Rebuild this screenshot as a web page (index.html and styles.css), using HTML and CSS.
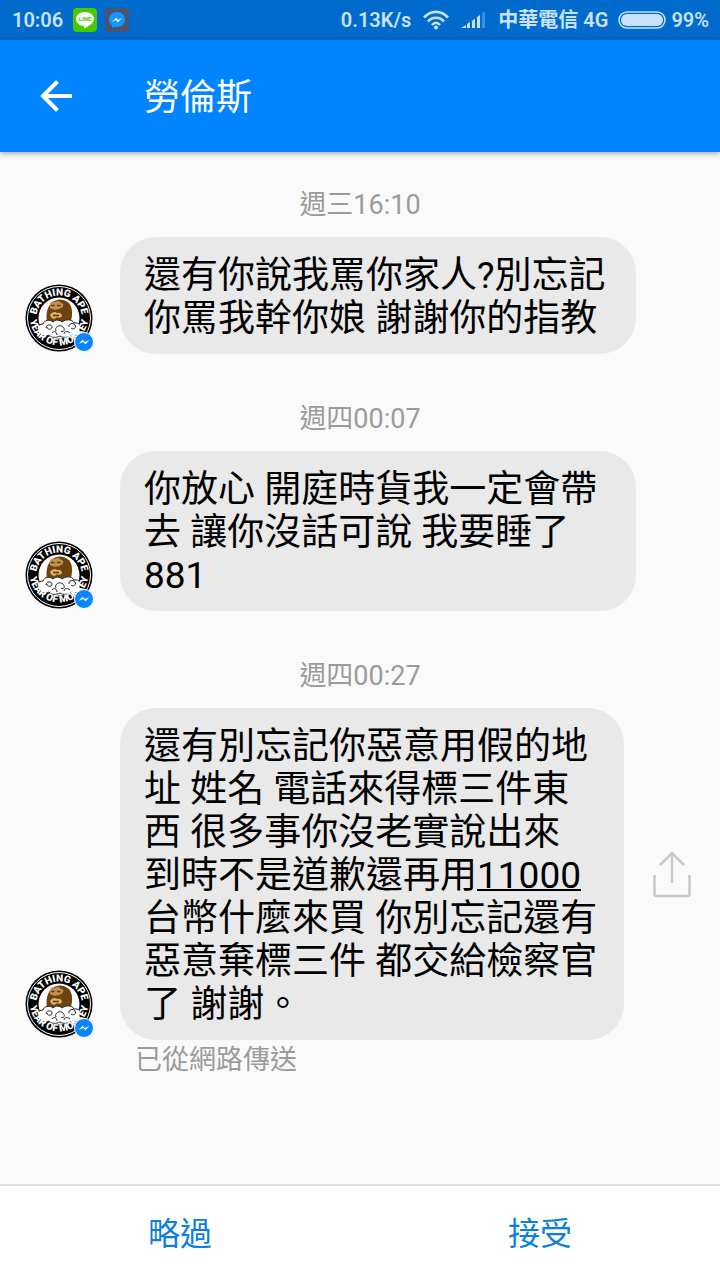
FILE: index.html
```html
<!DOCTYPE html>
<html lang="zh-Hant">
<head>
    <meta charset="UTF-8">
    <meta name="viewport" content="width=device-width, initial-scale=1.0">
    <title>勞倫斯</title>
    <link rel="stylesheet" href="styles.css">
</head>
<body>

<!-- Shared drawings -->
<svg class="symbols" aria-hidden="true">
    <symbol id="avatar" viewBox="0 0 68 68" overflow="visible">
        <defs>
            <path id="arc-top" d="M11.500 38 A22.800 22.800 0 1 1 56.500 38"/>
            <path id="arc-bottom" d="M4.500 32 A29.500 29.500 0 0 0 63.500 32"/>
        </defs>
        <circle cx="34" cy="34" r="33.500" fill="#000"/>
        <circle cx="34" cy="34" r="31.500" fill="none" stroke="#fff" stroke-width="1"/>
        <circle cx="34" cy="34" r="20.500" fill="#fff"/>
        <path d="M22 38C20 27 24 16 35 15.500C46 16 49 25 46 37C42 39 27 40 22 38Z" fill="#6d430f"/>
        <path d="M25 24C24 19 27 16 30 18C32 16 35 17 36 19C39 19 39 23 36 24L34 25C31 26 28 26 25 24Z" fill="#c5924e"/>
        <path d="M25 31C27 28 30 27 32 29C35 28 37 30 37 32C36 34 33 34 32 33C30 36 26 35 25 31Z" fill="#e0b070"/>
        <path d="M26 21.500h3.500M32 21.500h3.500M28 31.500h6" fill="none" stroke="#5b370e" stroke-width="1.500"/>
        <path d="M15 49C11 46 12 40 18 40C19 36 25 35 28 38C31 35 35 36 37 38C41 35 47 35 49 39C54 38 57 42 54 46C56 50 51 53 47 51C43 54 38 54 35 52C31 54 26 54 24 51C20 53 15 52 15 49Z" fill="#fff" stroke="#222" stroke-width="1"/>
        <path d="M21 44c0-4 6-4 6-1s-5 3-5 0M31 47c-2-4 4-7 7-4s0 6-2 4M44 43c-1-3 4-5 6-2s-2 5-4 3M27 49c2-3 5-1 5 2M39 50c0-3 4-3 6-1" fill="none" stroke="#222" stroke-width="1"/>
        <text class="avatar-text"><textPath href="#arc-top" startOffset="50%">BATHING APE</textPath></text>
        <text class="avatar-text"><textPath href="#arc-bottom" startOffset="50%">YEAR OF MONKEY</textPath></text>
    </symbol>
    <symbol id="messenger" viewBox="0 0 20 20">
        <circle cx="10" cy="10" r="9.500" fill="#0a84ff" stroke="#fff" stroke-width="1"/>
        <path d="M4.500 12L8.500 7.700L10.800 10L15.500 8L11.500 12.300L9.200 10Z" fill="#fff"/>
    </symbol>
</svg>

<div class="app">
    <div class="status-bar">
        <span>10:06</span>
        <svg class="app-icon" viewBox="0 0 24 24">
            <rect width="24" height="24" rx="4" fill="#4ac800"/>
            <path d="M12 4C7 4 3 7 3 11C3 14.500 6 17.400 10.500 18C11.500 18.200 11 19.500 11.200 20.500C15 18.500 21 15.500 21 11C21 7 17 4 12 4Z" fill="#fff"/>
            <text class="line-text" x="12" y="13">LINE</text>
        </svg>
        <svg class="app-icon messenger-icon" viewBox="0 0 24 24">
            <rect width="24" height="24" rx="4" fill="#485570"/>
            <path d="M12 4C7.500 4 4 7.300 4 11.500C4 14 5 16 7 17.500L7 20L10 18.700C16 20 20 16 20 11.500C20 7.300 16.500 4 12 4Z" fill="#1496ff"/>
            <path d="M7 14L11 9.700L13.300 12L17 10L13 14.300L10.700 12Z" fill="#fff"/>
        </svg>
        <span class="speed">0.13K/s</span>
        <svg class="wifi" viewBox="0 0 26 20">
            <g fill="none" stroke="#c9e2fa" stroke-width="2.600">
                <path d="M1 7.500C8 0 18 0 25 7.500"/>
                <path d="M5 11.500C9.500 6.500 16.500 6.500 21 11.500"/>
                <path d="M9 15C11.500 12 14.500 12 17 15"/>
            </g>
            <circle cx="13" cy="17.500" r="2" fill="#c9e2fa"/>
        </svg>
        <svg class="signal" viewBox="0 0 25 18">
            <path d="M0 17L5 14V17ZM6 17V13L9 11V17ZM11 17V10L14 7.500V17ZM16 17V6L19 4V17Z" fill="#c9e2fa"/>
            <path d="M21 17V2L24 0V17Z" fill="#3d8edb"/>
        </svg>
        <span class="carrier">中華電信 4G</span>
        <svg class="battery" viewBox="0 0 48 18">
            <rect x="1" y="1" width="46" height="16" rx="8" fill="none" stroke="#c9e2fa" stroke-width="1.500"/>
            <rect x="3" y="3" width="42" height="12" rx="6" fill="#c9e2fa"/>
        </svg>
        <span>99%</span>
    </div>

    <header class="header">
        <button class="back" aria-label="返回">
            <svg viewBox="0 0 32 32"><path d="M32 16H3M17.500 1.500L3 16L17.500 30.500" fill="none" stroke="#fff" stroke-width="4"/></svg>
        </button>
        <h1>勞倫斯</h1>
    </header>

    <main class="chat">
        <section class="group">
            <time>週三16:10</time>
            <div class="message">
                <div class="avatar">
                    <svg class="photo"><use href="#avatar"/></svg>
                    <svg class="badge"><use href="#messenger"/></svg>
                </div>
                <p class="bubble">還有你說我罵你家人?別忘記你罵我幹你娘 謝謝你的指教</p>
            </div>
        </section>

        <section class="group">
            <time>週四00:07</time>
            <div class="message">
                <div class="avatar">
                    <svg class="photo"><use href="#avatar"/></svg>
                    <svg class="badge"><use href="#messenger"/></svg>
                </div>
                <p class="bubble">你放心 開庭時貨我一定會帶去 讓你沒話可說 我要睡了 881</p>
            </div>
        </section>

        <section class="group">
            <time>週四00:27</time>
            <div class="message with-share">
                <div class="avatar">
                    <svg class="photo"><use href="#avatar"/></svg>
                    <svg class="badge"><use href="#messenger"/></svg>
                </div>
                <p class="bubble">還有別忘記你惡意用假的地址 姓名 電話來得標三件東西 很多事你沒老實說出來 到時不是道歉還再用<a href="#">11000</a>台幣什麼來買 你別忘記還有惡意棄標三件 都交給檢察官了 謝謝。</p>
                <button class="share" aria-label="分享">
                    <svg viewBox="0 0 38 48"><path d="M1.500 25V44Q1.500 46 3.500 46H34.500Q36.500 46 36.500 44V25M19 33V3M7 15L19 3L31 15" fill="none" stroke="#c8c8c8" stroke-width="2.500"/></svg>
                </button>
            </div>
            <p class="sent">已從網路傳送</p>
        </section>
    </main>

    <footer class="actions">
        <button>略過</button>
        <button>接受</button>
    </footer>
</div>

</body>
</html>
```
FILE: styles.css
```css
:root {
    --primary: #0084ff;
    --status-bg: #006bcd;
    --status-text: #c9e2fa;
    --page-bg: #fafafa;
    --bubble-bg: #e9e9e9;
    --muted: #9b9b9b;
}

* { margin: 0; padding: 0; box-sizing: border-box; }

body {
    font-family: Roboto, "Noto Sans CJK TC", sans-serif;
    background-color: var(--page-bg);
    color: #000;
}

button { background: none; border: none; font-family: inherit; cursor: pointer; }
svg { display: block; flex: none; }

.symbols { position: absolute; width: 0; height: 0; }

.app {
    display: flex;
    flex-direction: column;
    min-height: 100vh;
}

/* Status bar */
.status-bar {
    display: flex;
    align-items: center;
    height: 40px;
    padding: 0 11px 0 12px;
    background-color: var(--status-bg);
    color: var(--status-text);
    font-size: 20px;
    font-weight: 600;
    line-height: 24px;
    white-space: nowrap;
}
.app-icon { width: 24px; height: 24px; margin-left: 10px; }
.messenger-icon { margin-left: 8px; }
.line-text { font: bold 6px Roboto, sans-serif; fill: #4ac800; text-anchor: middle; }
.speed { margin-left: auto; }
.wifi { width: 26px; height: 20px; margin-left: 12px; }
.signal { width: 25px; height: 18px; margin: 0 12px; }
.battery { width: 48px; height: 18px; margin: 0 5px 0 10px; }

/* Header */
.header {
    display: flex;
    align-items: center;
    height: 112px;
    background-color: var(--primary);
    color: #fff;
    box-shadow: 0 1px 6px rgba(0, 0, 0, 0.4);
}
.back { width: 144px; padding: 40px; }
.back svg { width: 32px; height: 32px; }
.header h1 { padding-bottom: 4px; font-size: 36px; font-weight: 400; }

/* Messages */
.chat {
    flex: 1;
    display: flex;
    flex-direction: column;
    gap: 48px;
    padding: 36px 0 48px;
}
.group { display: flex; flex-direction: column; }
.group time {
    margin-bottom: 15px;
    color: var(--muted);
    font-size: 27px;
    line-height: 34px;
    text-align: center;
}
.message {
    display: flex;
    align-items: flex-end;
    padding-right: 84px;
}
.message.with-share { padding-right: 0; }
.avatar {
    position: relative;
    flex: none;
    margin: 0 27px 2px 25px;
}
.photo { width: 68px; height: 68px; overflow: visible; }
.badge {
    position: absolute;
    right: -1px;
    bottom: 0;
    width: 20px;
    height: 20px;
}
.avatar-text {
    font: 900 10px Roboto, sans-serif;
    fill: #fff;
    text-anchor: middle;
}
.bubble {
    flex: 1;
    padding: 17px 24px 14px;
    border-radius: 36px;
    background-color: var(--bubble-bg);
    font-size: 37px;
    line-height: 43px;
}
.bubble a { color: inherit; text-decoration: underline; text-decoration-thickness: 2px; }
.share {
    align-self: center;
    width: 96px;
    padding: 0 29px;
}
.share svg { width: 38px; height: 48px; }
.sent {
    padding-left: 135px;
    color: var(--muted);
    font-size: 27px;
    line-height: 41px;
}

/* Bottom actions */
.actions {
    display: flex;
    height: 96px;
    border-top: 2px solid #dfdfdf;
    background-color: #fff;
}
.actions button {
    flex: 1;
    padding-bottom: 4px;
    color: #0b7fe0;
    font-size: 32px;
}
```
